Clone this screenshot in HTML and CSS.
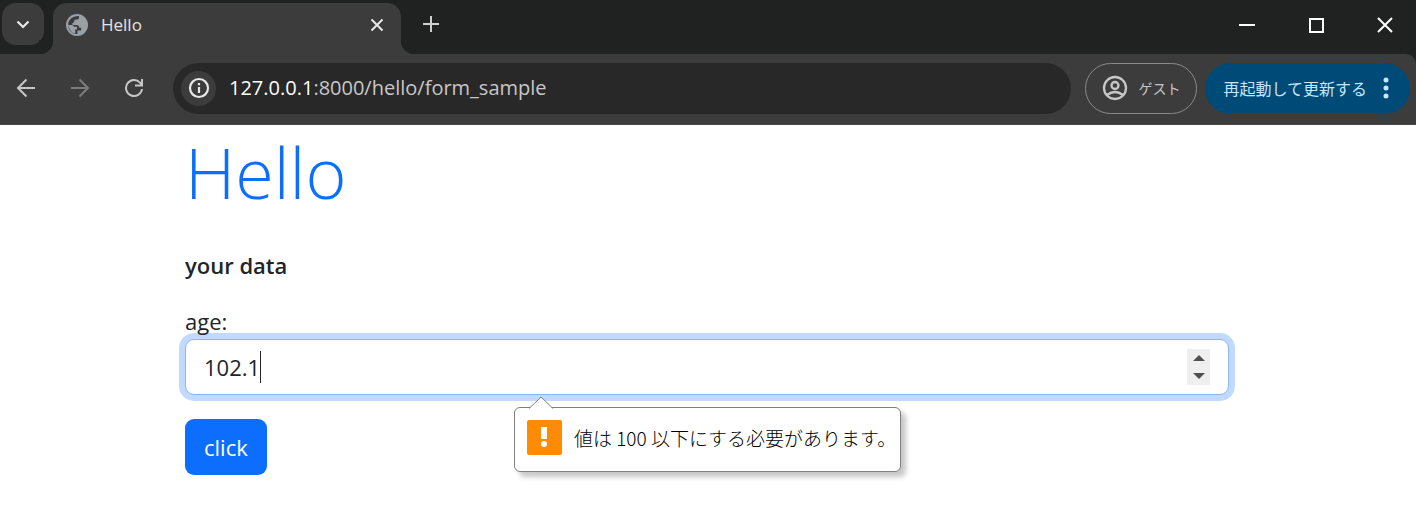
FILE: index.html
```html
<!DOCTYPE html>
<html lang="ja">
<head>
<meta charset="utf-8">
<meta name="viewport" content="width=device-width, initial-scale=1">
<title>Hello</title>
<link rel="stylesheet" href="styles.css">
</head>
<body>
<header class="browser">
  <div class="tab-strip">
    <button class="tab-search" aria-label="Search tabs"><svg width="16" height="16" viewBox="0 0 16 16"><path d="M2.500 5.500 8 11l5.500-5.500" fill="none" stroke="#e8e8e8" stroke-width="2.200"/></svg></button>
    <div class="tab">
      <svg width="22" height="22" viewBox="0 0 24 24"><circle cx="12" cy="12" r="12" fill="#9aa0a6"/><path d="M14 2.200C14.500 4.500 14 6 12 6H10.500C9 6 9 7 9 8.500C9 9.500 7.500 9.500 7 10V12H11.500C13.500 12 14.500 13.500 14.500 15H16.500V18H12.500V21.800C11.500 22 10.500 21.900 9.800 21.700V18.500C8.500 18.500 7.500 17.500 7.500 16L2.300 11.500C2.500 6 7.500 1.800 14 2.200Z" fill="#3c3c3c"/><path d="M2.200 12.500 7 17.500C7 19 8 20 9.500 20V21.700Q3.500 20 2.200 12.500Z" fill="#3c3c3c"/><path d="M2.300 12H7L9 14H12V17H10V21.500Q4 20 2.300 12Z" fill="#9aa0a6"/></svg>
      <span class="tab-title">Hello</span>
      <button class="icon-button" aria-label="Close tab"><svg width="16" height="16" viewBox="0 0 16 16"><path d="m2.500 2.500 11 11m0-11-11 11" stroke="#e8e8e8" stroke-width="2"/></svg></button>
    </div>
    <button class="icon-button new-tab" aria-label="New tab"><svg width="18" height="18" viewBox="0 0 18 18"><path d="M9 1v16M1 9h16" stroke="#d0d0d0" stroke-width="2"/></svg></button>
    <div class="window-controls">
      <button class="icon-button" aria-label="Minimize"><svg width="16" height="16" viewBox="0 0 16 16"><path d="M0 8h16" stroke="#fff" stroke-width="2"/></svg></button>
      <button class="icon-button" aria-label="Maximize"><svg width="16" height="16" viewBox="0 0 16 16"><path d="M2 2h13v13H2z" fill="none" stroke="#fff" stroke-width="2"/></svg></button>
      <button class="icon-button" aria-label="Close"><svg width="16" height="16" viewBox="0 0 16 16"><path d="m1 1 14 14m0-14L1 15" stroke="#fff" stroke-width="2"/></svg></button>
    </div>
  </div>
  <div class="toolbar">
    <nav class="nav-buttons">
      <button class="icon-button" aria-label="Back"><svg width="20" height="20" viewBox="0 0 20 20"><path d="M19 10H2m8.500-8.500L2 10l8.500 8.500" fill="none" stroke="#c7c7c7" stroke-width="2"/></svg></button>
      <button class="icon-button" aria-label="Forward"><svg width="20" height="20" viewBox="0 0 20 20"><path d="M1 10h17M9.500 1.500 18 10l-8.500 8.500" fill="none" stroke="#7c7c7c" stroke-width="2"/></svg></button>
      <button class="icon-button" aria-label="Reload"><svg width="20" height="20" viewBox="0 0 20 20"><path d="M18 11a8 8 0 1 1-2-6.300L18 7M18 1v6.500h-7" fill="none" stroke="#c7c7c7" stroke-width="2"/></svg></button>
    </nav>
    <div class="address-bar">
      <button class="site-info" aria-label="Site information"><svg width="22" height="22" viewBox="0 0 22 22"><circle cx="11" cy="11" r="9" fill="none" stroke="#e8e8e8" stroke-width="2.200"/><path d="M11 10v6M11 6v2.200" stroke="#e8e8e8" stroke-width="2.200"/></svg></button>
      <span class="url"><span class="host">127.0.0.1</span>:8000/hello/form_sample</span>
    </div>
    <button class="pill guest"><svg width="26" height="26" viewBox="0 0 26 26" fill="none" stroke="#c7c7c7" stroke-width="2.300"><circle cx="13" cy="13" r="11"/><circle cx="13" cy="10.500" r="3.500"/><path d="M5 20q8-6 16 0"/></svg><span>ゲスト</span></button>
    <button class="pill update"><span>再起動して更新する</span><svg width="6" height="22" viewBox="0 0 6 22" fill="#c2e7ff"><circle cx="3" cy="3" r="2.500"/><circle cx="3" cy="11" r="2.500"/><circle cx="3" cy="19" r="2.500"/></svg></button>
  </div>
</header>
<main class="container">
  <h1 class="heading">Hello</h1>
  <p class="lead">your data</p>
  <form class="form">
    <label class="label" for="age">age:</label>
    <div class="field">
      <input class="number" id="age" type="number" value="102.1" max="100" step="0.1">
      <span class="caret"></span>
      <span class="spinner">
        <button class="step" type="button" aria-label="Increase"><svg width="12" height="6" viewBox="0 0 12 6"><path d="M6 0 12 6H0z" fill="#505050"/></svg></button>
        <button class="step" type="button" aria-label="Decrease"><svg width="12" height="6" viewBox="0 0 12 6"><path d="M0 0h12L6 6z" fill="#505050"/></svg></button>
      </span>
      <div class="tooltip" role="alert">
        <svg class="arrow" width="24" height="13" viewBox="0 0 24 13"><path d="M0 13 12 1l12 12z" fill="#fff"/><path d="M0 12.500 12 1l12 11.500" fill="none" stroke="#808080"/></svg>
        <svg width="35" height="35" viewBox="0 0 35 35"><rect width="35" height="35" rx="2" fill="#ff8c00"/><path d="M14 7h6v12h-6z" fill="#fff"/><circle cx="17" cy="24" r="3" fill="#fff"/></svg>
        <span>値は 100 以下にする必要があります。</span>
      </div>
    </div>
    <button class="submit" type="submit">click</button>
  </form>
</main>
</body>
</html>
```
FILE: styles.css
```css
* { box-sizing: border-box; }
body {
  margin: 0;
  background: #fff;
  color: #212529;
  font: 23px/36px "Open Sans", "Noto Sans CJK JP", sans-serif;
}
button { border: 0; padding: 0; font: inherit; color: inherit; }
svg { display: block; flex: none; }
.browser { background: #202221; }
.tab-strip { display: flex; height: 54px; padding: 3px 0 0 2px; }
.tab-search {
  display: grid; place-items: center;
  width: 42px; height: 42px; border-radius: 14px; background: #3c3c3c;
}
.tab {
  position: relative;
  display: flex; align-items: center;
  width: 348px; margin-left: 9px; padding: 0 16px 8px 13px;
  border-radius: 14px 14px 0 0; background: #3c3c3c;
}
.tab::before, .tab::after {
  content: ""; position: absolute; bottom: 0; width: 14px; height: 14px;
}
.tab::before { right: 100%; background: radial-gradient(circle at 0 0, #202221 14px, #3c3c3c 15px); }
.tab::after { left: 100%; background: radial-gradient(circle at 100% 0, #202221 14px, #3c3c3c 15px); }
.tab-title { flex: 1; margin-left: 13px; color: #e3e3e3; font-size: 17px; line-height: 24px; }
.icon-button { display: grid; place-items: center; background: none; }
.new-tab { margin: 0 auto 9px 21px; }
.window-controls { display: flex; gap: 53px; padding: 0 23px 8px 0; }
.toolbar {
  display: flex; align-items: center; height: 71px;
  padding: 0 6px 2px 16px;
  background: #3c3c3c; border-bottom: 1px solid #4a4747;
  border-top-right-radius: 10px;
}
.nav-buttons { display: flex; gap: 34px; margin-right: 29px; }
.address-bar {
  flex: 1; display: flex; align-items: center; gap: 13px;
  height: 51px; padding: 0 8px; border-radius: 26px; background: #282828;
}
.site-info {
  display: grid; place-items: center;
  width: 35px; height: 35px; border-radius: 50%; background: #3c3c3c;
}
.url { color: #c7c7c7; font-size: 20px; line-height: 28px; white-space: nowrap; }
.host { color: #fff; }
.pill {
  display: flex; align-items: center; height: 51px; border-radius: 26px;
  font-family: "Noto Sans CJK JP", sans-serif; font-size: 16px; line-height: 24px; white-space: nowrap;
}
.guest {
  gap: 10px; margin: 0 8px 0 14px; padding: 0 16px;
  border: 1px solid #8a8a8a; background: none; color: #c7c7c7;
  font-size: 14px;
}
.update { gap: 16px; padding: 0 21px 0 18px; background: #004a77; color: #c2e7ff; }
.container { max-width: 1080px; margin: 0 auto; padding: 0 19px 32px 17px; }
.heading {
  margin: 0 0 12px; padding-top: 2px;
  color: #0d6efd; font-size: 70px; font-weight: 300; line-height: 90px;
}
.lead { margin: 0; padding: 18px 0; font-size: 22px; font-weight: 600; }
.form { margin: 0; padding-top: 2px; }
.label { position: relative; z-index: 1; display: block; font-size: 22px; }
.field { position: relative; margin-bottom: 24px; }
.number {
  display: block; width: 100%; height: 56px; padding: 0 18px;
  border: 1px solid #86b7fe; border-radius: 9px; outline: 0;
  box-shadow: 0 0 0 6px #c2daff;
  background: #fff; color: #212529; font: inherit; font-size: 22px;
  appearance: textfield;
}
.number::-webkit-inner-spin-button { appearance: none; margin: 0; }
.caret { position: absolute; left: 75px; top: 12px; width: 1px; height: 32px; background: #212529; }
.spinner {
  position: absolute; right: 19px; top: 10px;
  display: flex; flex-direction: column; width: 23px; height: 36px; background: #efefef;
}
.step { flex: 1; display: grid; place-items: center; background: none; }
.tooltip {
  position: absolute; left: 329px; top: 68px;
  display: flex; align-items: center; gap: 12px;
  width: 387px; height: 65px; padding: 0 12px 4px;
  border: 1px solid #808080; border-radius: 6px;
  box-shadow: 5px 5px 5px #c8c8c8;
  background: #fff; color: #000; white-space: nowrap;
  font-family: "Noto Sans CJK JP", sans-serif; font-size: 19px; font-weight: 300; line-height: 28px;
}
.arrow { position: absolute; left: 14px; bottom: 100%; margin-bottom: -1px; }
.submit {
  height: 56px; padding: 0 19px; border-radius: 9px;
  background: #0d6efd; color: #fff; font-size: 22px;
}
```
